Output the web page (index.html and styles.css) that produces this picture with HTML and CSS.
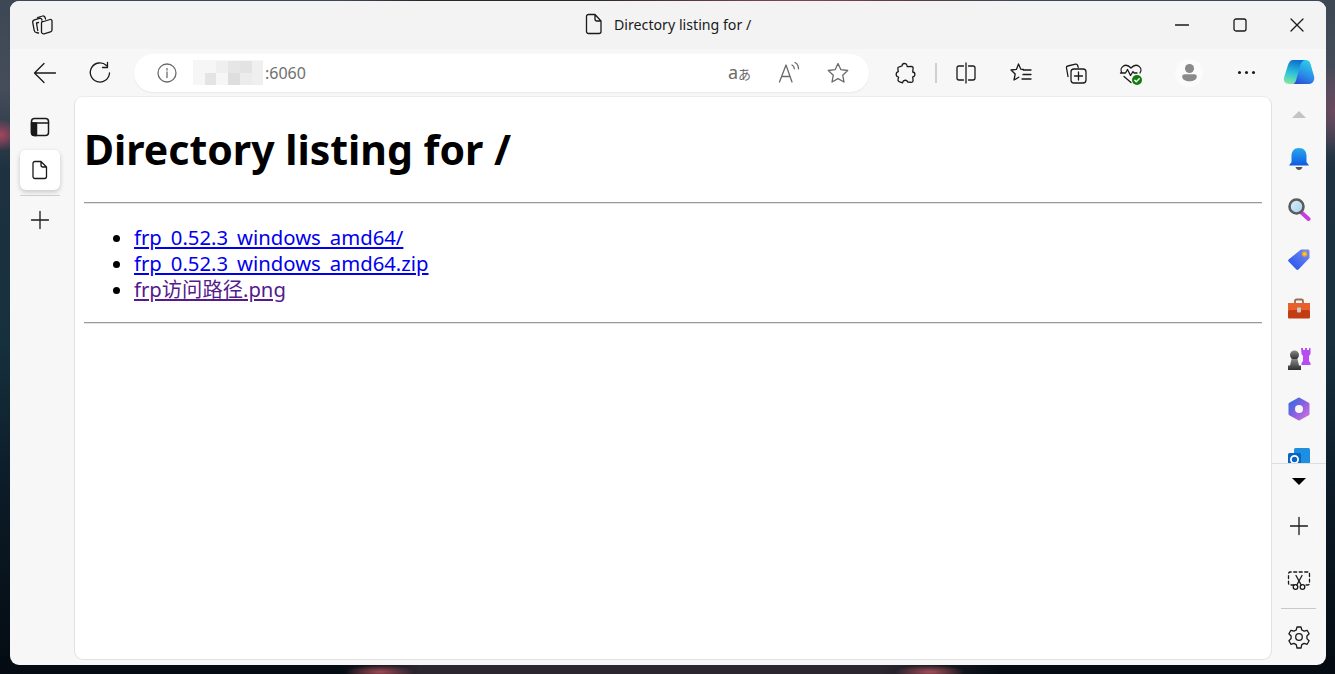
FILE: index.html
```html
<!DOCTYPE html>
<html lang="en">
<head>
    <meta charset="UTF-8">
    <meta name="viewport" content="width=device-width, initial-scale=1.0">
    <title>Directory listing for /</title>
    <link rel="stylesheet" href="styles.css">
</head>
<body>
    <div class="browser">
        <!-- Title bar -->
        <header class="titlebar">
            <svg class="workspaces" width="22" height="22" viewBox="0 0 22 22"><path d="M11 8l8-2.500c1-.3 2 .4 2 1.500v9c0 1-.5 1.500-1.500 1.800l-6.500 2c-1 .3-2.500-.5-2.500-1.700v-9c0-.8.300-1.300.500-1.600zM14.500 5c-.3-2-1.500-3.500-3-3l-5 1.500M11 6c-.3-1.400-1.500-2-2.700-1.600l-4.800 1.500c-1.200.4-2 1.300-1.800 2.500l1.500 8c.2 1.200 1 2 2.300 2.200l2 .4M7.500 8.500l-2 .5 1.200 7.500"/></svg>
            <div class="page-title">
                <svg width="18" height="22" viewBox="0 0 18 22"><path d="M3.500 1.500h6.500l6 6.500v10.500c0 1.200-.9 2-2 2h-10.500c-1.100 0-2-.8-2-2v-15c0-1.200.9-2 2-2zM10 1.500v4.500c0 1.200.9 2 2 2h4"/></svg>
                <span>Directory listing for /</span>
            </div>
            <div class="window-controls">
                <svg width="14" height="14" viewBox="0 0 14 14"><path d="M0.500 7h13"/></svg>
                <svg width="14" height="14" viewBox="0 0 14 14"><rect x="1" y="1" width="12" height="12" rx="2"/></svg>
                <svg class="close" width="14" height="14" viewBox="0 0 14 14"><path d="M1 1l12 12M13 1l-12 12"/></svg>
            </div>
        </header>

        <!-- Address bar and toolbar buttons -->
        <div class="toolbar">
            <svg class="tool tool-back" width="24" height="24" viewBox="0 0 24 24"><path d="M22.500 12h-21M11 2.500l-9.500 9.500 9.500 9.500"/></svg>
            <svg class="tool tool-reload" width="24" height="24" viewBox="0 0 24 24"><path d="M18.500 4.500a9.600 9.600 0 1 0 3 7.500M19.500 1.500v5h-5"/></svg>
            <div class="address">
                <svg class="info" width="20" height="20" viewBox="0 0 20 20"><circle cx="10" cy="10" r="9"/><path d="M10 9v5.500M10 5.500v1.500"/></svg>
                <svg class="mosaic" width="70" height="33" viewBox="0 0 70 33">
                    <rect x="0" y="4" width="70" height="25" fill="#f6f6f6"/>
                    <rect x="23" y="5" width="12" height="12" fill="#efefef"/>
                    <rect x="35" y="5" width="12" height="12" fill="#e6e6e6"/>
                    <rect x="47" y="5" width="12" height="12" fill="#e3e3e3"/>
                    <rect x="59" y="5" width="11" height="24" fill="#efefef"/>
                    <rect x="12" y="17" width="11" height="12" fill="#e4e4e4"/>
                    <rect x="35" y="17" width="12" height="12" fill="#dedede"/>
                    <rect x="47" y="17" width="12" height="12" fill="#ececec"/>
                </svg>
                <span class="port">:6060</span>
                <div class="address-actions">
                    <span class="translate">a<span class="translate-kana">あ</span></span>
                    <svg width="22" height="24" viewBox="0 0 22 24"><path d="M1.500 21l6.500-17 6 17M4 15.500h8M14 4c1.500.8 2.300 2.200 2.300 3.800M17 1.500c2.300 1.300 3.500 3.500 3.500 6.300"/></svg>
                    <svg class="star" width="24" height="24" viewBox="0 0 24 24"><path d="M12 2.500l2.900 6.200 6.800.8-5 4.700 1.300 6.800-6-3.400-6 3.400 1.300-6.800-5-4.700 6.800-.8z"/></svg>
                </div>
            </div>
            <div class="toolbar-buttons">
                <svg class="tool tool-puzzle" width="22" height="24" viewBox="0 0 22 24"><path d="M8 5c0-3 4.500-3.500 5-.5l.2 1.200 4.300-.2c1 0 1.700.7 1.600 1.700l-.4 3.800c2.800.1 3 4.600 0 5l.4 3.600c0 1-.7 1.700-1.600 1.700l-3.800-.3c-.7-2.400-4.500-2.300-5 .2l-.1.600-3.500-1.200c-1-.4-1.400-1.200-1.100-2.200l.6-2.200c-3-.5-3.300-4.700-.3-5.500l-.5-3c-.1-1 .4-1.700 1.400-1.800z"/></svg>
                <i class="tool-sep"></i>
                <svg class="tool tool-split" width="22" height="24" viewBox="0 0 22 24"><path d="M11 2v20M8.500 5h-4.500c-1.300 0-2 .8-2 2v10c0 1.200.7 2 2 2h4.500M13.500 5h4.500c1.300 0 2 .8 2 2v10c0 1.200-.7 2-2 2h-4.500"/></svg>
                <svg class="tool tool-fav" width="24" height="24" viewBox="0 0 24 24"><path d="M9.500 3l2.300 5.200 2.700.3M7.500 8.300l-5.500.7 4.200 4-1.200 6 4.800-2.800M7.500 8.300l2-5.300M14 9h8M14 13.500h8M13 18h9"/></svg>
                <svg class="tool tool-coll" width="24" height="24" viewBox="0 0 24 24"><path d="M4 15.500l-1.500-8.500c-.2-1 .3-1.800 1.300-2l7.700-1.800c1-.2 1.900.3 2.200 1.300l.5 1.800"/><rect x="7" y="8" width="15" height="14" rx="3"/><path d="M14.500 11v8M10.500 15h8"/></svg>
                <svg class="tool tool-health" width="24" height="26" viewBox="0 0 24 26"><path d="M3 13c-3.500-5.500 3.500-11 9-5 5.500-6 12.500-.5 9 5M1.500 13h5l2-3.500 3 6 2.500-4 1 1.500h3M5 16.500l7 6"/><circle cx="18" cy="20" r="5" fill="#107c10" stroke="none"/><path class="check" d="M15.800 20.200l1.500 1.500 2.900-3"/></svg>
                <div class="profile"><svg width="18" height="22" viewBox="0 0 18 22"><circle cx="9" cy="6" r="5" fill="#8a8a8a"/><path d="M1 15c0-1.600 1.200-2.500 2.800-2.500h10.400c1.600 0 2.800.9 2.800 2.500 0 3-3.500 5-8 5s-8-2-8-5z" fill="#8a8a8a"/></svg></div>
                <div class="more"><i></i><i></i><i></i></div>
                <svg class="copilot" width="32" height="28" viewBox="0 0 32 28">
                    <defs>
                        <linearGradient id="copA" x1="0.500" y1="0" x2="0.300" y2="1"><stop offset="0" stop-color="#0f6fd0"/><stop offset="0.550" stop-color="#2cc4d8"/><stop offset="1" stop-color="#86e6a0"/></linearGradient>
                        <linearGradient id="copB" x1="0.700" y1="0" x2="0.300" y2="1"><stop offset="0" stop-color="#2ad0e8"/><stop offset="0.600" stop-color="#2b8be8"/><stop offset="1" stop-color="#2a4fd8"/></linearGradient>
                    </defs>
                    <path d="M16 1h7c2 0 3.500 1 4.500 4l3.500 12c1 4-1 8-5 8h-14c-2 0-3-1-2-3z" fill="url(#copB)"/>
                    <path d="M10 1h12c-2 .5-3.500 2-4.500 4.500l-4.500 16c-.6 2-2 3.500-4 3.500h-3c-4 0-6-3-4.800-7l3.800-12c1-3 2.500-5 5-5z" fill="url(#copA)"/>
                </svg>
            </div>
        </div>

        <div class="main">
            <!-- Vertical tabs -->
            <nav class="tabs-rail">
                <svg class="rail-layout" width="20" height="20" viewBox="0 0 20 20"><rect x="1.500" y="1.500" width="17" height="17" rx="3"/><path d="M1.500 6h17"/><path class="solid" d="M1.500 6h5v12.500h-2c-2 0-3-1-3-3z"/></svg>
                <div class="tab-active"><svg width="18" height="20" viewBox="0 0 18 20"><path d="M4 1.500h6l5.500 5.500v9.500c0 1.200-.9 2-2 2h-9.500c-1.100 0-2-.8-2-2v-13c0-1.200.9-2 2-2zM10 1.500v3.500c0 1.200.9 2 2 2h3.500"/></svg></div>
                <i class="rail-divider"></i>
                <svg class="rail-plus" width="20" height="20" viewBox="0 0 20 20"><path d="M10 1.500v17M1.500 10h17"/></svg>
            </nav>

            <!-- Page content -->
            <main class="page">
                <h1>Directory listing for /</h1>
                <hr>
                <ul>
                    <li><a href="#">frp_0.52.3_windows_amd64/</a></li>
                    <li><a href="#">frp_0.52.3_windows_amd64.zip</a></li>
                    <li><a href="#" class="visited">frp访问路径.png</a></li>
                </ul>
                <hr>
            </main>

            <!-- Sidebar apps -->
            <aside class="apps">
                <div class="apps-scroll">
                    <div class="arrow-up"></div>
                    <div class="app">
                        <svg width="24" height="24" viewBox="0 0 24 24"><defs><linearGradient id="bell" x1="0" y1="0" x2="0" y2="1"><stop offset="0" stop-color="#28a8f0"/><stop offset="1" stop-color="#0f5ae0"/></linearGradient></defs><path d="M12 1c5 0 7.500 3.500 7.500 8v6l2.500 3.500h-20l2.500-3.500v-6c0-4.500 2.500-8 7.500-8z" fill="url(#bell)"/><path d="M8.500 20h7c-.6 2-2 3-3.500 3s-2.900-1-3.500-3z" fill="#555"/></svg>
                    </div>
                    <div class="app">
                        <svg width="24" height="24" viewBox="0 0 24 24"><defs><linearGradient id="lens" x1="0" y1="0" x2="1" y2="1"><stop offset="0" stop-color="#dff0fb"/><stop offset="1" stop-color="#9fd0ee"/></linearGradient></defs><path d="M15 16l6.500 6" stroke="#c63ee0" stroke-width="4" stroke-linecap="round"/><circle cx="9.500" cy="9.500" r="7" fill="url(#lens)" stroke="#5c5c5c" stroke-width="2.600"/></svg>
                    </div>
                    <div class="app">
                        <svg width="24" height="24" viewBox="0 0 24 24"><defs><linearGradient id="tag" x1="1" y1="0" x2="0" y2="1"><stop offset="0" stop-color="#7a8cf5"/><stop offset="1" stop-color="#1f4fe8"/></linearGradient></defs><path d="M14 2.500h7c.8 0 1.500.6 1.500 1.500v7l-11 11.500c-.6.600-1.500.6-2.100 0l-7.800-7.900c-.6-.6-.6-1.500 0-2.100z" fill="url(#tag)"/><circle cx="17.500" cy="7" r="2" fill="#f4d63c" stroke="#e8a820"/></svg>
                    </div>
                    <div class="app">
                        <svg width="24" height="24" viewBox="0 0 24 24"><path d="M8 7v-3c0-1 .6-1.500 1.500-1.500h5c.9 0 1.500.5 1.500 1.500v3" fill="none" stroke="#9a6a52" stroke-width="1.800"/><rect x="1" y="6" width="22" height="7" fill="#e8602a"/><rect x="1" y="13" width="22" height="8.500" rx="1" fill="#c43d12"/><rect x="10" y="10.500" width="4" height="5" rx="1" fill="#c9c9c9"/></svg>
                    </div>
                    <div class="app">
                        <svg width="24" height="24" viewBox="0 0 24 24"><defs><linearGradient id="pawn" x1="0" y1="0" x2="0" y2="1"><stop offset="0" stop-color="#8a8a8a"/><stop offset="1" stop-color="#2e2e2e"/></linearGradient></defs><path d="M14 1h2v2h2v-2h2v2h2v-2h1.500v6l-1.500 2v5l1.500 2v2h-9v-2l1.500-2v-5l-1.500-2z" fill="#b74df0"/><circle cx="7.500" cy="8" r="4.500" fill="url(#pawn)"/><path d="M4.500 12h6l1.500 6.500h-9zM1 18.500h13v4.500h-13z" fill="url(#pawn)"/></svg>
                    </div>
                    <div class="app">
                        <svg width="24" height="24" viewBox="0 0 24 24"><defs><linearGradient id="mso" x1="0" y1="0" x2="1" y2="1"><stop offset="0" stop-color="#2a6fe0"/><stop offset="0.500" stop-color="#8a5fe0"/><stop offset="1" stop-color="#d070e0"/></linearGradient></defs><path d="M12 2l9 5v10l-9 5-9-5v-10z" fill="url(#mso)" stroke="url(#mso)" stroke-linejoin="round" stroke-width="3"/><circle cx="12" cy="12" r="4" fill="#f7f7f7"/></svg>
                    </div>
                    <div class="app">
                        <svg width="24" height="24" viewBox="0 0 24 24"><rect x="7" y="1" width="16" height="20" rx="1.500" fill="#1d8fe0"/><rect x="1" y="6" width="13" height="13" rx="1.500" fill="#0a64c4"/><circle cx="7.500" cy="12.500" r="3.600" fill="none" stroke="#fff" stroke-width="1.800"/></svg>
                    </div>
                </div>
                <div class="apps-bottom">
                    <div class="arrow-row"><div class="arrow-down"></div></div>
                    <div class="app-tool">
                        <svg width="20" height="20" viewBox="0 0 20 20"><path d="M10 1.500v17M1.500 10h17"/></svg>
                    </div>
                    <div class="app-tool">
                        <svg width="24" height="22" viewBox="0 0 24 22"><path class="dashed" d="M7 16h-3.500c-1.300 0-2-.8-2-2v-9c0-1.300.7-2 2-2h17c1.300 0 2 .7 2 2v9c0 1.200-.7 2-2 2h-3.500"/><circle cx="8.500" cy="18" r="2.300"/><circle cx="15.500" cy="18" r="2.300"/><path d="M9.800 16l5.200-9.500M14.200 16l-5.200-9.500"/></svg>
                    </div>
                    <i class="apps-divider"></i>
                    <div class="app-tool">
                        <svg width="24" height="24" viewBox="0 0 24 24"><circle cx="12" cy="12" r="3.300"/><path d="M10 2h4l.8 3 2.300 1.200 3-.9 2 3.500-2.200 2.200v2.600l2.200 2.200-2 3.500-3-.9-2.300 1.200-.8 3.400h-4l-.8-3.400-2.300-1.200-3 .9-2-3.500 2.200-2.200v-2.600l-2.200-2.200 2-3.500 3 .9 2.300-1.200z"/></svg>
                    </div>
                </div>
            </aside>
        </div>
    </div>
</body>
</html>
```

FILE: styles.css
```css
body {
    margin: 0;
    height: 674px;
    overflow: hidden;
    font-family: 'Noto Sans', 'Noto Sans CJK SC', sans-serif;
    /* Desktop wallpaper: only the edges show round the window */
    background:
        radial-gradient(ellipse 35px 7px at 380px 672px, #a04a55, transparent),
        radial-gradient(ellipse 35px 7px at 930px 672px, #a5505a, transparent),
        radial-gradient(ellipse 220px 3px at 800px 0, #8a4a5e, transparent),
        radial-gradient(ellipse 22px 16px at 0 135px, #a84560, transparent),
        radial-gradient(ellipse 30px 45px at 1335px 110px, #6e4a60, transparent),
        linear-gradient(90deg, transparent 340px, #2b2630 420px, #2b2630 880px, transparent 1000px),
        linear-gradient(#3d4854 0, #454c5a 90px, #1e3140 170px, #17303e 340px, #0c1c28 480px, #040b12 674px);
}

.browser {
    width: 1316px;
    height: 664px;
    margin: 1px 0 0 10px;
    display: flex;
    flex-direction: column;
    background-color: #f7f7f7;
    border-radius: 9px;
    overflow: hidden;
}

svg {
    fill: none;
    stroke: #1a1a1a;
    stroke-width: 1.3;
    stroke-linecap: round;
    stroke-linejoin: round;
    flex: none;
    display: block;
}

.titlebar {
    height: 48px;
    flex: none;
    display: flex;
    align-items: center;
    position: relative;
    background-color: #f3f3f3;
}

.workspaces {
    margin-left: 21px;
}

.page-title {
    position: absolute;
    left: 575px;
    top: 12px;
    display: flex;
    align-items: center;
    gap: 11px;
    font-size: 14.2px;
    color: #1a1a1a;
}

.window-controls {
    margin-left: auto;
    margin-right: 22px;
    display: flex;
    gap: 44px;
}

.window-controls .close {
    margin-left: -1px;
}

.toolbar {
    height: 47px;
    flex: none;
    display: flex;
    align-items: center;
}

.tool-back {
    margin-left: 23px;
}

.tool-reload {
    margin-left: 31px;
}

.address {
    width: 735px;
    height: 38px;
    margin-left: 22px;
    display: flex;
    align-items: center;
    background-color: white;
    border-radius: 19px;
    box-shadow: 0 1px 2px rgba(0, 0, 0, 0.06);
}

.info {
    margin-left: 23px;
    stroke: #6a6a6a;
}

.mosaic {
    margin-left: 16px;
    stroke: none;
}

.port {
    margin-left: 2px;
    font-size: 16px;
    color: #6f6f6f;
}

.address-actions {
    margin-left: auto;
    margin-right: 19px;
    display: flex;
    align-items: center;
    gap: 26px;
}

.address-actions svg {
    stroke: #6a6a6a;
}

.translate {
    width: 24px;
    font-size: 18px;
    line-height: 24px;
    color: #6a6a6a;
    white-space: nowrap;
}

.translate-kana {
    font-family: 'Noto Sans CJK JP', sans-serif;
    font-size: 13px;
}

.toolbar-buttons {
    display: flex;
    align-items: center;
}

.tool-puzzle {
    margin-left: 25px;
}

.tool-sep {
    width: 2px;
    height: 20px;
    margin-left: 19px;
    background-color: #cfcfcf;
}

.tool-split {
    margin-left: 18px;
}

.tool-fav {
    margin-left: 32px;
}

.tool-coll {
    margin-left: 31px;
}

.tool-health {
    margin-left: 31px;
}

.check {
    stroke: white;
    stroke-width: 1.500;
}

.profile {
    width: 28px;
    height: 28px;
    margin-left: 32px;
    display: flex;
    align-items: center;
    justify-content: center;
    background-color: #fbfbfb;
    border-radius: 50%;
}

.profile svg {
    stroke: none;
    width: 17px;
    height: 20px;
}

.more {
    margin-left: 35px;
    display: flex;
    gap: 4px;
}

.more i {
    width: 3px;
    height: 3px;
    background-color: #1a1a1a;
    border-radius: 50%;
}

.copilot {
    margin-left: 28px;
    stroke: none;
}

.main {
    flex: 1;
    display: flex;
    min-height: 0;
}

.tabs-rail {
    width: 64px;
    flex: none;
    display: flex;
    flex-direction: column;
    align-items: center;
    padding: 21px 4px 0 0;
    box-sizing: border-box;
}

.rail-layout {
    margin-left: -1px;
    stroke-width: 1.500;
}

.rail-layout .solid {
    fill: #1a1a1a;
}

.tab-active {
    width: 40px;
    height: 40px;
    margin-top: 13px;
    display: flex;
    align-items: center;
    justify-content: center;
    background-color: white;
    border-radius: 6px;
    box-shadow: 0 2px 5px rgba(0, 0, 0, 0.2);
}

.rail-divider {
    width: 40px;
    height: 1px;
    margin-top: 5px;
    background-color: #cfcfcf;
}

.rail-plus {
    margin-top: 14px;
    margin-left: -1px;
}

.page {
    width: 1198px;
    height: 564px;
    flex: none;
    padding: 0 9px;
    box-sizing: border-box;
    background-color: white;
    border: 1px solid #e2e2e2;
    border-top-color: #ececec;
    border-radius: 9px;
    color: black;
    overflow: hidden;
}

h1 {
    margin: 25px 0 26px 0;
    font-size: 41px;
    line-height: 54px;
    font-weight: 700;
}

hr {
    margin: 0;
    border: none;
    border-top: 1px solid #9a9a9a;
    border-bottom: 1px solid #e4e4e4;
}

ul {
    margin: 20px 0 20px 0;
    padding-left: 50px;
    font-size: 20.3px;
    line-height: 26px;
}

a {
    color: #0000ee;
}

a.visited {
    color: #551a8b;
}

.apps {
    width: 54px;
    flex: none;
    display: flex;
    flex-direction: column;
}

.apps-scroll {
    height: 367px;
    flex: none;
    overflow: hidden;
    border-bottom: 1px solid #dedede;
}

.arrow-up {
    width: 0;
    height: 0;
    margin: 15px 0 16px 20px;
    border: 7px solid transparent;
    border-top: none;
    border-bottom-color: #c4c4c4;
}

.app {
    height: 50px;
    display: flex;
    align-items: center;
    justify-content: center;
    padding-right: 1px;
}

.app svg {
    stroke: none;
}

.arrow-row {
    height: 35px;
    display: flex;
    align-items: center;
    justify-content: center;
}

.arrow-down {
    width: 0;
    height: 0;
    border: 7px solid transparent;
    border-bottom: none;
    border-top-color: black;
}

.app-tool {
    height: 54px;
    display: flex;
    align-items: center;
    justify-content: center;
    padding-right: 1px;
}

.dashed {
    stroke-dasharray: 3 2.500;
}

.apps-divider {
    display: block;
    width: 35px;
    height: 1px;
    margin: 1px 0 1px 9px;
    background-color: #c8c8c8;
}
```
